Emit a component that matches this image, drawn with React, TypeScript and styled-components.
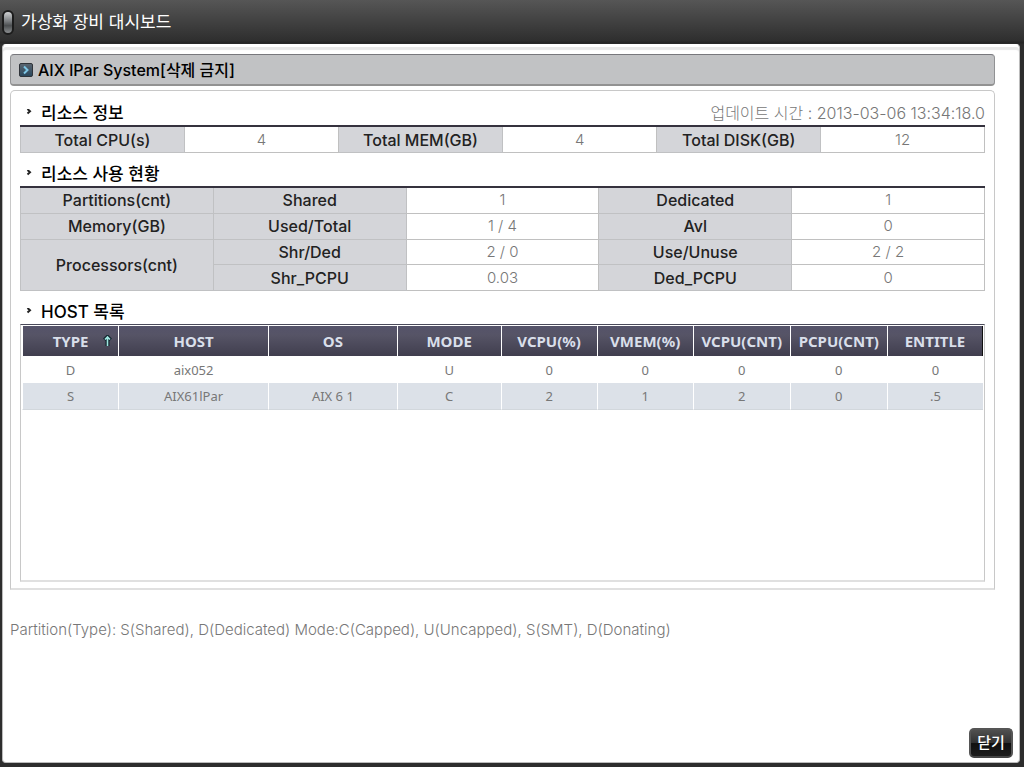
import React from 'react';
import styled, { createGlobalStyle } from 'styled-components';

const GlobalStyle = createGlobalStyle`
  * { box-sizing: border-box; }
  body {
    margin: 0;
    background: #2d2d2d;
    font-family: Inter, "Noto Sans CJK KR", sans-serif;
    font-size: 15px;
    color: #777;
  }
`;

const Page = styled.div`
  display: flex;
  flex-direction: column;
  min-height: 100vh;
  padding: 0 4px 4px 2px;
  background: linear-gradient(#565656, #2f2f2f 40px, #242424 43px, #2d2d2d 44px);
`;

const Header = styled.header`
  display: flex;
  align-items: center;
  gap: 7px;
  height: 44px;
`;

const HeaderPill = styled.span`
  width: 12px;
  height: 25px;
  border: 2px solid #1c1c1c;
  border-radius: 6px;
  background: linear-gradient(#d0d2d4, #777a7d 45%, #4b4e50 65%, #8b8e90);
`;

const PageTitle = styled.h1`
  margin: 0;
  font-size: 17px;
  line-height: 20px;
  font-weight: 400;
  color: #fff;
`;

const Panel = styled.main`
  display: flex;
  flex: 1;
  flex-direction: column;
  padding: 9px 24px 4px 7px;
  border: 1px solid #bbb;
  border-top-color: #fff;
  border-radius: 4px;
  background: #fff;
  box-shadow: inset 0 2px 0 #fff, inset 0 5px 1px #e8e8e8;
`;

const SystemBar = styled.div`
  display: flex;
  align-items: center;
  gap: 5px;
  height: 32px;
  padding: 0 8px;
  border: 1px solid #919294;
  border-top-color: #77777c;
  border-bottom: 2px solid #929292;
  border-radius: 4px;
  background: #c1c2c4;
`;

const SystemName = styled.h2`
  margin: 0;
  font-size: 16px;
  line-height: 20px;
  font-weight: 500;
  color: #000;
`;

const Frame = styled.section`
  margin-top: 4px;
  padding: 8px 9px 6px;
  border: 1px solid #c8c8c8;
  border-bottom: 2px solid #e0e0e0;
  border-radius: 5px 5px 0 0;
`;

const SectionHead = styled.div`
  display: flex;
  align-items: center;
  gap: 9px;
  height: 26px;
  padding: 2px 0 0 6px;

  table + & { margin-top: 7px; }
`;

const SectionTitle = styled.h3`
  flex: 1;
  margin: 0;
  font-size: 17px;
  line-height: 24px;
  font-weight: 500;
  color: #000;
`;

const Updated = styled.span`
  font-size: 16px;
  line-height: 22px;
  font-weight: 300;
`;

const InfoTable = styled.table<{ $height: number }>`
  width: 100%;
  height: ${(p) => p.$height}px;
  table-layout: fixed;
  border-collapse: collapse;
  border: 1px solid #c0c0c0;
  border-top: 2px solid #35323e;
`;

const Label = styled.th`
  padding: 0;
  border: 1px solid #c0c1c3;
  border-top-color: inherit;
  background: #d4d5d9;
  color: #222;
  font-size: 16px;
  line-height: 20px;
  font-weight: 500;
`;

const Value = styled.td`
  padding: 0;
  border: 1px solid #c0c0c0;
  border-top-color: inherit;
  text-align: center;
  font-size: 15px;
  line-height: 20px;
  font-weight: 300;
`;

const InfoRow = styled.tr`
  border-color: #c0c1c3;
`;

const HostBox = styled.div`
  min-height: 258px;
  padding: 1px 1px 0;
  border: 1px solid #c8c8c8;
  border-top-color: #4a4a5a;
  border-bottom: 2px solid #e0e0e0;
`;

const HostTable = styled.table`
  width: 100%;
  table-layout: fixed;
  border-collapse: separate;
  border-spacing: 0;
  font-family: "Noto Sans", "Noto Sans CJK KR", sans-serif;
  font-size: 13px;
  line-height: 20px;
`;

const HostHead = styled.th`
  position: relative;
  height: 30px;
  padding: 0;
  border-left: 1px solid #fff;
  background: linear-gradient(#55536a 0, #565466 30%, #403e4e);
  color: #d9dfea;
  font-size: 15px;
  font-weight: 700;
  white-space: nowrap;

  &:last-child { border-right: 1px solid #111; }
`;

const SortArrow = styled.svg`
  position: absolute;
  top: 9px;
  right: 5px;
`;

const HostCell = styled.td`
  height: 26px;
  padding: 0;
  border-left: 1px solid #fff;
  text-align: center;
`;

const HostRow = styled.tr`
  &:first-child td { height: 27px; }
  &:nth-child(even) td {
    height: 27px;
    background: #dce1e8;
    border-bottom: 1px solid #d2d7dc;
  }
`;

const Legend = styled.p`
  margin: 30px 0 0;
  line-height: 20px;
  font-weight: 300;
`;

const Footer = styled.footer`
  display: flex;
  justify-content: flex-end;
  margin: auto -18px 0 0;
`;

const CloseButton = styled.button`
  width: 44px;
  height: 30px;
  padding: 0;
  border: 2px solid #555;
  border-bottom-color: #444;
  border-radius: 5px;
  background: linear-gradient(#505050, #303030 50%, #101010 52%, #1c1c1c);
  color: #fff;
  font-family: inherit;
  font-size: 15px;
  line-height: 20px;
  font-weight: 500;
`;

const Bullet = () => (
  <svg width="6" height="8" viewBox="0 0 6 8" aria-hidden="true">
    <path d="M1.5 0 4 2.3 1.5 4.5" fill="none" stroke="#222" strokeWidth="2" />
  </svg>
);

const SystemIcon = () => (
  <svg width="14" height="14" viewBox="0 0 14 14" aria-hidden="true">
    <defs>
      <linearGradient id="sys" x1="0" y1="0" x2="0" y2="1">
        <stop offset="0" stopColor="#5b6671" />
        <stop offset="1" stopColor="#27465c" />
      </linearGradient>
    </defs>
    <rect x="0.5" y="0.5" width="13" height="13" rx="1.5" fill="url(#sys)" stroke="#30343a" />
    <path d="M5 3.5 8.5 7 5 10.5" fill="none" stroke="#7cc6e6" strokeWidth="2" />
  </svg>
);

const hostColumns = [
  { name: 'TYPE', width: '10%' },
  { name: 'HOST', width: '15.6%' },
  { name: 'OS', width: '13.4%' },
  { name: 'MODE', width: '10.8%' },
  { name: 'VCPU(%)', width: '10%' },
  { name: 'VMEM(%)', width: '10%' },
  { name: 'VCPU(CNT)', width: '10.1%' },
  { name: 'PCPU(CNT)', width: '10.1%' },
  { name: 'ENTITLE', width: '10%' },
];

const hosts = [
  ['D', 'aix052', '', 'U', '0', '0', '0', '0', '0'],
  ['S', 'AIX61lPar', 'AIX 6 1', 'C', '2', '1', '2', '0', '.5'],
];

const totals = [
  { name: 'Total CPU(s)', value: '4', width: '16%' },
  { name: 'Total MEM(GB)', value: '4', width: '16%' },
  { name: 'Total DISK(GB)', value: '12', width: '17%' },
];

const usage = [
  { group: 'Partitions(cnt)', span: 1, cells: ['Shared', '1', 'Dedicated', '1'] },
  { group: 'Memory(GB)', span: 1, cells: ['Used/Total', '1 / 4', 'Avl', '0'] },
  { group: 'Processors(cnt)', span: 2, cells: ['Shr/Ded', '2 / 0', 'Use/Unuse', '2 / 2'] },
  { group: '', span: 0, cells: ['Shr_PCPU', '0.03', 'Ded_PCPU', '0'] },
];

export default function App() {
  return (
    <>
      <GlobalStyle />
      <Page>
        <Header>
          <HeaderPill />
          <PageTitle>가상화 장비 대시보드</PageTitle>
        </Header>
        <Panel>
          <SystemBar>
            <SystemIcon />
            <SystemName>AIX lPar System[삭제 금지]</SystemName>
          </SystemBar>
          <Frame>
            <SectionHead>
              <Bullet />
              <SectionTitle>리소스 정보</SectionTitle>
              <Updated>업데이트 시간 : 2013-03-06 13:34:18.0</Updated>
            </SectionHead>
            <InfoTable $height={28}>
              <colgroup>
                {totals.map((t) => (
                  <React.Fragment key={t.name}>
                    <col style={{ width: '17%' }} />
                    <col style={{ width: t.width }} />
                  </React.Fragment>
                ))}
              </colgroup>
              <tbody>
                <tr>
                  {totals.map((t) => (
                    <React.Fragment key={t.name}>
                      <Label scope="row">{t.name}</Label>
                      <Value>{t.value}</Value>
                    </React.Fragment>
                  ))}
                </tr>
              </tbody>
            </InfoTable>
            <SectionHead>
              <Bullet />
              <SectionTitle>리소스 사용 현황</SectionTitle>
            </SectionHead>
            <InfoTable $height={105}>
              <tbody>
                {usage.map((row) => (
                  <InfoRow key={row.cells[0]}>
                    {row.span > 0 && (
                      <Label scope="rowgroup" rowSpan={row.span}>{row.group}</Label>
                    )}
                    <Label scope="row">{row.cells[0]}</Label>
                    <Value>{row.cells[1]}</Value>
                    <Label scope="row">{row.cells[2]}</Label>
                    <Value>{row.cells[3]}</Value>
                  </InfoRow>
                ))}
              </tbody>
            </InfoTable>
            <SectionHead>
              <Bullet />
              <SectionTitle>HOST 목록</SectionTitle>
            </SectionHead>
            <HostBox>
              <HostTable>
                <colgroup>
                  {hostColumns.map((c) => (
                    <col key={c.name} style={{ width: c.width }} />
                  ))}
                </colgroup>
                <thead>
                  <tr>
                    {hostColumns.map((c, i) => (
                      <HostHead key={c.name} scope="col" aria-sort={i === 0 ? 'ascending' : undefined}>
                        {c.name}
                        {i === 0 && (
                          <SortArrow width="11" height="12" viewBox="0 0 11 12" aria-hidden="true">
                            <path d="M5.5 11V2M2.5 5l3-3 3 3" fill="none" stroke="#10242c" strokeWidth="4" />
                            <path d="M5.5 11V2M3 4.5l2.5-2.5L8 4.5" fill="none" stroke="#9fe6e0" strokeWidth="1.6" />
                          </SortArrow>
                        )}
                      </HostHead>
                    ))}
                  </tr>
                </thead>
                <tbody>
                  {hosts.map((host) => (
                    <HostRow key={host[1]}>
                      {host.map((value, i) => (
                        <HostCell key={hostColumns[i].name}>{value}</HostCell>
                      ))}
                    </HostRow>
                  ))}
                </tbody>
              </HostTable>
            </HostBox>
          </Frame>
          <Legend>
            Partition(Type): S(Shared), D(Dedicated) Mode:C(Capped), U(Uncapped), S(SMT), D(Donating)
          </Legend>
          <Footer>
            <CloseButton type="button">닫기</CloseButton>
          </Footer>
        </Panel>
      </Page>
    </>
  );
}
